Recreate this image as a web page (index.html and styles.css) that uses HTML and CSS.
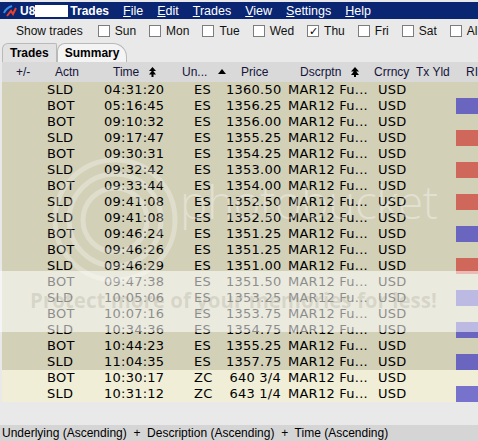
FILE: index.html
```html
<html>
    <head>
        <link rel="stylesheet" href="styles.css">
    </head>
    <body>
        <div class="titlebar">
            <svg class="appicon" width="14" height="14" viewBox="0 0 14 14">
                <path d="M1 9 C3 4 6 3 9 2" stroke="#3a8ee8" stroke-width="2" fill="none"/>
                <path d="M4 12 L8 7 L10 10 L13 4" stroke="#e8402a" stroke-width="2" fill="none"/>
            </svg>
            <span class="acct">U8</span><span class="redact"></span><span class="wintitle">Trades</span>
            <div class="menu">
                <span><u>F</u>ile</span>
                <span><u>E</u>dit</span>
                <span><u>T</u>rades</span>
                <span><u>V</u>iew</span>
                <span><u>S</u>ettings</span>
                <span><u>H</u>elp</span>
            </div>
        </div>
        <div class="showbar">
            <span class="showlabel">Show trades</span>
            <span class="day"><span class="cb"></span>Sun</span>
            <span class="day"><span class="cb"></span>Mon</span>
            <span class="day"><span class="cb"></span>Tue</span>
            <span class="day"><span class="cb"></span>Wed</span>
            <span class="day"><span class="cb checked">&#10003;</span>Thu</span>
            <span class="day"><span class="cb"></span>Fri</span>
            <span class="day"><span class="cb"></span>Sat</span>
            <span class="day"><span class="cb"></span>All</span>
        </div>
        <div class="tabs">
            <div class="tab active">Trades</div>
            <div class="tab">Summary</div>
        </div>
        <div class="grid header">
            <div class="c-pm">+/-</div>
            <div class="c-act">Actn</div>
            <div class="c-time">Time
                <svg class="sorticon" width="7" height="10" viewBox="0 0 7 10"><path d="M3.5 0 L7 4 L0 4 Z M3.5 3 L7 7.5 L0 7.5 Z M2.5 7 H4.5 V10 H2.5 Z" fill="#000"/></svg>
            </div>
            <div class="c-und">Un...
                <svg class="sorticon tri" width="8" height="5" viewBox="0 0 8 5"><path d="M4 0 L8 5 L0 5 Z" fill="#000"/></svg>
            </div>
            <div class="c-price">Price</div>
            <div class="c-desc">Dscrptn
                <svg class="sorticon" width="8" height="10" viewBox="0 0 8 10"><path d="M4 0 L8 4.5 L0 4.5 Z M4 3 L8 8 L0 8 Z M3 7.5 H5 V10 H3 Z" fill="#000"/></svg>
            </div>
            <div class="c-cur">Crrncy</div>
            <div class="c-yld">Tx Yld</div>
            <div class="c-ri">RI</div>
        </div>
        <div class="rows">
            <div class="grid row es"><div></div><div class="c-act">SLD</div><div class="c-time">04:31:20</div><div class="c-und">ES</div><div class="c-price">1360.50</div><div class="c-desc">MAR12 Fu...</div><div class="c-cur">USD</div><div></div><div></div></div>
            <div class="grid row es"><div></div><div class="c-act">BOT</div><div class="c-time">05:16:45</div><div class="c-und">ES</div><div class="c-price">1356.25</div><div class="c-desc">MAR12 Fu...</div><div class="c-cur">USD</div><div></div><div class="bar blue"></div></div>
            <div class="grid row es"><div></div><div class="c-act">BOT</div><div class="c-time">09:10:32</div><div class="c-und">ES</div><div class="c-price">1356.00</div><div class="c-desc">MAR12 Fu...</div><div class="c-cur">USD</div><div></div><div></div></div>
            <div class="grid row es"><div></div><div class="c-act">SLD</div><div class="c-time">09:17:47</div><div class="c-und">ES</div><div class="c-price">1355.25</div><div class="c-desc">MAR12 Fu...</div><div class="c-cur">USD</div><div></div><div class="bar red"></div></div>
            <div class="grid row es"><div></div><div class="c-act">BOT</div><div class="c-time">09:30:31</div><div class="c-und">ES</div><div class="c-price">1354.25</div><div class="c-desc">MAR12 Fu...</div><div class="c-cur">USD</div><div></div><div></div></div>
            <div class="grid row es"><div></div><div class="c-act">SLD</div><div class="c-time">09:32:42</div><div class="c-und">ES</div><div class="c-price">1353.00</div><div class="c-desc">MAR12 Fu...</div><div class="c-cur">USD</div><div></div><div class="bar red"></div></div>
            <div class="grid row es"><div></div><div class="c-act">BOT</div><div class="c-time">09:33:44</div><div class="c-und">ES</div><div class="c-price">1354.00</div><div class="c-desc">MAR12 Fu...</div><div class="c-cur">USD</div><div></div><div></div></div>
            <div class="grid row es"><div></div><div class="c-act">SLD</div><div class="c-time">09:41:08</div><div class="c-und">ES</div><div class="c-price">1352.50</div><div class="c-desc">MAR12 Fu...</div><div class="c-cur">USD</div><div></div><div class="bar red"></div></div>
            <div class="grid row es"><div></div><div class="c-act">SLD</div><div class="c-time">09:41:08</div><div class="c-und">ES</div><div class="c-price">1352.50</div><div class="c-desc">MAR12 Fu...</div><div class="c-cur">USD</div><div></div><div></div></div>
            <div class="grid row es"><div></div><div class="c-act">BOT</div><div class="c-time">09:46:24</div><div class="c-und">ES</div><div class="c-price">1351.25</div><div class="c-desc">MAR12 Fu...</div><div class="c-cur">USD</div><div></div><div class="bar blue"></div></div>
            <div class="grid row es"><div></div><div class="c-act">BOT</div><div class="c-time">09:46:26</div><div class="c-und">ES</div><div class="c-price">1351.25</div><div class="c-desc">MAR12 Fu...</div><div class="c-cur">USD</div><div></div><div></div></div>
            <div class="grid row es"><div></div><div class="c-act">SLD</div><div class="c-time">09:46:29</div><div class="c-und">ES</div><div class="c-price">1351.00</div><div class="c-desc">MAR12 Fu...</div><div class="c-cur">USD</div><div></div><div class="bar red"></div></div>
            <div class="grid row es"><div></div><div class="c-act">BOT</div><div class="c-time">09:47:38</div><div class="c-und">ES</div><div class="c-price">1351.50</div><div class="c-desc">MAR12 Fu...</div><div class="c-cur">USD</div><div></div><div></div></div>
            <div class="grid row es"><div></div><div class="c-act">SLD</div><div class="c-time">10:05:06</div><div class="c-und">ES</div><div class="c-price">1353.25</div><div class="c-desc">MAR12 Fu...</div><div class="c-cur">USD</div><div></div><div class="bar blue"></div></div>
            <div class="grid row es"><div></div><div class="c-act">BOT</div><div class="c-time">10:07:16</div><div class="c-und">ES</div><div class="c-price">1353.75</div><div class="c-desc">MAR12 Fu...</div><div class="c-cur">USD</div><div></div><div></div></div>
            <div class="grid row es"><div></div><div class="c-act">SLD</div><div class="c-time">10:34:36</div><div class="c-und">ES</div><div class="c-price">1354.75</div><div class="c-desc">MAR12 Fu...</div><div class="c-cur">USD</div><div></div><div class="bar blue"></div></div>
            <div class="grid row es"><div></div><div class="c-act">BOT</div><div class="c-time">10:44:23</div><div class="c-und">ES</div><div class="c-price">1355.25</div><div class="c-desc">MAR12 Fu...</div><div class="c-cur">USD</div><div></div><div></div></div>
            <div class="grid row es"><div></div><div class="c-act">SLD</div><div class="c-time">11:04:35</div><div class="c-und">ES</div><div class="c-price">1357.75</div><div class="c-desc">MAR12 Fu...</div><div class="c-cur">USD</div><div></div><div class="bar blue"></div></div>
            <div class="grid row zc"><div></div><div class="c-act">BOT</div><div class="c-time">10:30:17</div><div class="c-und">ZC</div><div class="c-price">640 3/4</div><div class="c-desc">MAR12 Fu...</div><div class="c-cur">USD</div><div></div><div></div></div>
            <div class="grid row zc"><div></div><div class="c-act">SLD</div><div class="c-time">10:31:12</div><div class="c-und">ZC</div><div class="c-price">643 1/4</div><div class="c-desc">MAR12 Fu...</div><div class="c-cur">USD</div><div></div><div class="bar blue2"></div></div>
        </div>
        <div class="blank"></div>
        <div class="statusbar">Underlying (Ascending)  +  Description (Ascending)  +  Time (Ascending)</div>

        <!-- photobucket watermark over the grid -->
        <svg class="wm-logo" width="140" height="140" viewBox="0 0 140 140">
            <circle cx="70" cy="70" r="60" stroke="#fff" stroke-width="5" fill="none"/>
            <circle cx="70" cy="70" r="46" stroke="#fff" stroke-width="5" fill="none"/>
            <circle cx="70" cy="70" r="32" stroke="#fff" stroke-width="5" fill="none"/>
        </svg>
        <div class="wm-text">photobucket</div>
        <div class="wm-band"></div>
        <div class="wm-slogan">Protect more of your memories for less!</div>
    </body>
</html>
```

FILE: styles.css
```css
body {
    margin: 0;
    width: 478px;
    height: 441px;
    overflow: hidden;
    background-color: #e9e9e9;
    font-family: "Liberation Sans", Arial, sans-serif;
    font-size: 12px;
    position: relative;
}
.titlebar {
    margin-top: 2px;
    height: 17px;
    background-color: #0a2673;
    color: white;
    display: flex;
    align-items: center;
    font-size: 12px;
}
.appicon {
    margin-left: 3px;
    margin-right: 3px;
}
.acct {
    font-weight: bold;
}
.redact {
    display: inline-block;
    width: 33px;
    height: 12px;
    background-color: white;
}
.wintitle {
    font-weight: bold;
    margin-left: 2px;
}
.menu {
    display: flex;
    gap: 14px;
    margin-left: 14px;
    font-size: 12.5px;
}
.menu u {
    text-decoration-thickness: 1px;
}
.showbar {
    height: 23px;
    display: flex;
    align-items: center;
    padding-left: 16px;
    font-size: 12px;
    color: #111;
    white-space: nowrap;
    overflow: hidden;
}
.showlabel {
    margin-right: 15px;
    flex-shrink: 0;
}
.day {
    display: flex;
    align-items: center;
    margin-right: 13px;
    flex-shrink: 0;
}
.cb {
    display: inline-block;
    width: 10px;
    height: 10px;
    border: 1px solid #7d7d7d;
    background-color: white;
    margin-right: 5px;
    font-size: 11px;
    line-height: 10px;
    text-align: center;
    color: #000;
}
.tabs {
    height: 20px;
    display: flex;
    align-items: flex-end;
    padding-left: 2px;
}
.tab {
    height: 18px;
    line-height: 18px;
    font-weight: bold;
    padding: 0 7px;
    border: 1px solid #b9b9b9;
    border-bottom: 0;
    background-color: #f4f4f4;
    border-radius: 8px 14px 0 0;
}
.tab.active {
    background-color: #e2e2e2;
    border-radius: 6px 2px 0 0;
}
.grid {
    display: grid;
    grid-template-columns: 38px 50px 85px 51px 60px 86px 40px 44px 22px;
    margin-left: 2px;
}
.header {
    height: 20px;
    line-height: 20px;
    background-color: #d9d9d9;
    color: #14143c;
    font-size: 12px;
}
.header div {
    white-space: nowrap;
}
.header .c-pm { padding-left: 14px; }
.header .c-act { padding-left: 15px; }
.header .c-time { padding-left: 23px; }
.header .c-und { padding-left: 7px; }
.header .c-price { padding-left: 15px; }
.header .c-desc { padding-left: 14px; }
.header .c-cur { padding-left: 2px; }
.header .c-yld { padding-left: 4px; }
.header .c-ri { padding-left: 10px; }
.sorticon {
    margin-left: 6px;
    vertical-align: -1px;
}
.sorticon.tri {
    margin-left: 7px;
    vertical-align: 2px;
}
.row {
    height: 16px;
    line-height: 16px;
    font-family: "DejaVu Sans", Verdana, sans-serif;
    font-size: 13px;
    letter-spacing: 0.25px;
    color: #000;
}
.row div {
    white-space: nowrap;
}
.es {
    background-color: #d3d0b8;
}
.zc {
    background-color: #f0eed6;
}
.row .c-act { padding-left: 7px; }
.row .c-time { padding-left: 14px; }
.row .c-und { padding-left: 19px; }
.row .c-price { text-align: right; padding-right: 5px; }
.row .c-desc { padding-left: 2px; }
.row .c-cur { padding-left: 6px; }
.bar.blue { background-color: #6a66c0; }
.bar.blue2 { background-color: #7772cc; }
.bar.red { background-color: #d0675b; }
.blank {
    height: 23px;
}
.statusbar {
    height: 16px;
    line-height: 16px;
    background-color: #d5d5d5;
    padding-left: 2px;
    white-space: pre;
    color: #000;
}
.wm-logo {
    position: absolute;
    left: 45px;
    top: 150px;
    opacity: 0.28;
}
.wm-text {
    position: absolute;
    left: 180px;
    top: 170px;
    font-family: "Open Sans", sans-serif;
    font-size: 46px;
    font-weight: 300;
    color: rgba(255, 255, 255, 0.35);
    letter-spacing: -0.5px;
}
.wm-band {
    position: absolute;
    left: 0;
    top: 271px;
    width: 478px;
    height: 61px;
    background-color: rgba(255, 255, 255, 0.55);
}
.wm-slogan {
    position: absolute;
    left: 30px;
    top: 286px;
    font-family: "Open Sans", sans-serif;
    font-size: 20.5px;
    font-weight: bold;
    color: rgba(140, 140, 120, 0.22);
    white-space: nowrap;
}
```
